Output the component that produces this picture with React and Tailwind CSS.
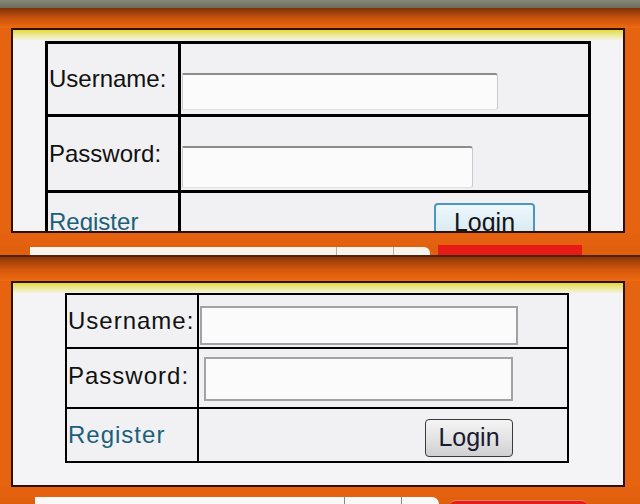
export default function App() {
  const font = "font-['Liberation_Sans',Arial,sans-serif]";
  return (
    <div className={`w-[640px] h-[504px] overflow-hidden bg-[#e6630f] flex flex-col ${font}`}>
      <div className="h-[8px] bg-gradient-to-b from-[#858a78] to-[#6e6a58]" />
      <div className="h-[20px] bg-gradient-to-b from-[#7a3208] via-[#c9520c] to-[#ee6a10]" />

      {/* Panel 1 */}
      <div className="ml-[11px] w-[614px] h-[205px] shrink-0 border-2 border-[#2a1005] bg-[#f4f4f6] overflow-hidden">
        <div className="h-[10px] bg-gradient-to-b from-[#e4da2e] to-[#f4f3dc]" />
        <div className="ml-[32px] mt-[1px] w-[546px] border-[3px] border-black bg-[#f1f1f3]">
          <div className="flex h-[73px] border-b-[3px] border-black">
            <div className="w-[133px] border-r-[3px] border-black flex items-center pl-[1px] text-[24px] text-[#111]">Username:</div>
            <div className="flex-1 pt-[29px] pl-[1px]">
              <div className="w-[316px] h-[37px] bg-[#fbfbfb] border-t-2 border-t-[#8c8c8c] border-x border-x-[#c9c9c9] border-b border-b-[#e0e0e0] rounded-r-[3px]" />
            </div>
          </div>
          <div className="flex h-[76px] border-b-[3px] border-black">
            <div className="w-[133px] border-r-[3px] border-black flex items-center pl-[1px] text-[24px] text-[#111]">Password:</div>
            <div className="flex-1 pt-[29px] pl-[1px]">
              <div className="w-[291px] h-[42px] bg-[#fbfbfb] border-t-2 border-t-[#8c8c8c] border-x border-x-[#c9c9c9] border-b border-b-[#e0e0e0] rounded-r-[3px]" />
            </div>
          </div>
          <div className="flex h-[60px]">
            <div className="w-[133px] border-r-[3px] border-black pl-[1px] pt-[11px] text-[24px] text-[#1b5f7c]">Register</div>
            <div className="flex-1 pt-[10px] pl-[253px]">
              <div className="w-[101px] h-[40px] rounded-[4px] border-2 border-[#4a97c4] bg-gradient-to-b from-[#eef7fc] to-[#d2e6f1] flex justify-center pt-[2px] text-[25px] text-[#151515] leading-[30px]">Login</div>
            </div>
          </div>
        </div>
      </div>

      <div className="h-[12px] shrink-0 bg-[#e4620f]" />
      <div className="h-[10px] shrink-0 flex bg-[#e0600e]">
        <div className="ml-[30px] mt-[2px] flex h-[8px]">
          <div className="w-[306px] bg-[#f7f4ee]" />
          <div className="w-[1px] bg-[#b8b0a8]" />
          <div className="w-[56px] bg-[#f7f4ee]" />
          <div className="w-[1px] bg-[#b8b0a8]" />
          <div className="w-[36px] bg-[#f7f4ee] rounded-tr-[6px]" />
        </div>
        <div className="ml-[8px] w-[144px] h-[10px] bg-[#e81c16]" />
      </div>
      <div className="h-[2px] shrink-0 bg-[#4a2410]" />
      <div className="h-[24px] shrink-0 bg-gradient-to-b from-[#8a3606] via-[#d2560c] to-[#f06a10]" />

      {/* Panel 2 */}
      <div className="ml-[11px] w-[614px] h-[206px] shrink-0 border-2 border-[#2a1005] bg-[#f4f4f6] overflow-hidden">
        <div className="h-[10px] bg-gradient-to-b from-[#e4da2e] to-[#f4f3dc]" />
        <div className="ml-[52px] w-[504px] border-[2px] border-black bg-[#f1f1f3]">
          <div className="flex h-[54px] border-b-[2px] border-black">
            <div className="w-[132px] border-r-[2px] border-black flex items-center pl-[1px] text-[24px] tracking-[1px] text-[#111]">Username:</div>
            <div className="flex-1 pt-[11px] pl-[1px]">
              <div className="w-[318px] h-[39px] bg-[#fbfbfb] border-2 border-[#a2a2a2]" />
            </div>
          </div>
          <div className="flex h-[60px] border-b-[2px] border-black">
            <div className="w-[132px] border-r-[2px] border-black flex items-center pb-[4px] pl-[1px] text-[24px] tracking-[1px] text-[#111]">Password:</div>
            <div className="flex-1 pt-[8px] pl-[5px]">
              <div className="w-[309px] h-[44px] bg-[#fbfbfb] border-2 border-[#a2a2a2]" />
            </div>
          </div>
          <div className="flex h-[52px]">
            <div className="w-[132px] border-r-[2px] border-black flex items-center pl-[1px] text-[24px] tracking-[1px] text-[#1b5f7c]">Register</div>
            <div className="flex-1 pt-[10px] pl-[226px]">
              <div className="w-[88px] h-[38px] rounded-[4px] border border-[#3a3a3a] bg-gradient-to-b from-[#f4f4f4] via-[#e4e4e4] to-[#cfcfcf] flex items-center justify-center text-[25px] text-[#1a1a30]">Login</div>
            </div>
          </div>
        </div>
      </div>

      <div className="h-[10px] shrink-0 bg-[#e4620f]" />
      <div className="flex-1 flex bg-[#e0600e]">
        <div className="ml-[35px] flex h-full">
          <div className="w-[309px] bg-[#f8f8f8]" />
          <div className="w-[1px] bg-[#888]" />
          <div className="w-[56px] bg-[#f8f8f8]" />
          <div className="w-[1px] bg-[#888]" />
          <div className="w-[37px] bg-[#f8f8f8] rounded-tr-[8px]" />
        </div>
        <div className="ml-[10px] mt-[3px] w-[139px] h-full rounded-t-[8px] bg-[#e81c16] border-t border-[#f08070]" />
      </div>
    </div>
  );
}
